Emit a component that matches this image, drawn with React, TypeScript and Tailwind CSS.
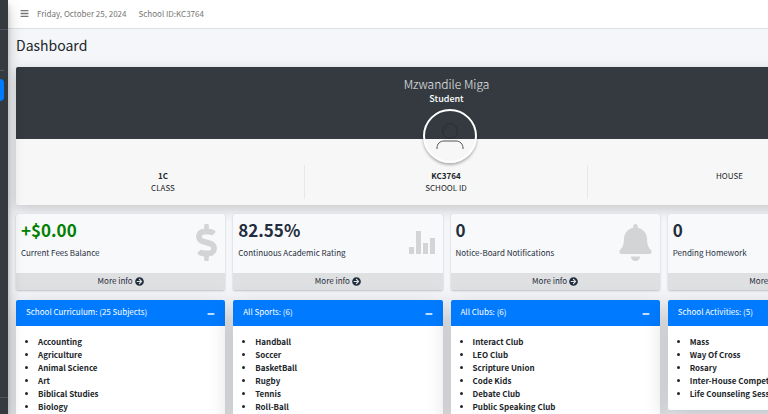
import type { ReactNode } from "react";
import {
  FaArrowCircleRight,
  FaBars,
  FaBell,
  FaBook,
  FaDollarSign,
  FaMinus,
} from "react-icons/fa";

type Stat = {
  value: string;
  label: string;
  icon: ReactNode;
  valueClass?: string;
};

const StatsBars = () => (
  <svg viewBox="0 0 26 23" className="mt-[7px] h-[23px] w-[26px]" fill="currentColor">
    <rect x="0" y="16" width="5" height="7" />
    <rect x="7" y="0" width="5" height="23" />
    <rect x="14" y="12" width="5" height="11" />
    <rect x="21" y="7" width="5" height="16" />
  </svg>
);

const stats: Stat[] = [
  {
    value: "+$0.00",
    label: "Current Fees Balance",
    icon: <FaDollarSign size={37} className="-mr-2" />,
    valueClass: "text-[green]",
  },
  { value: "82.55%", label: "Continuous Academic Rating", icon: <StatsBars /> },
  {
    value: "0",
    label: "Notice-Board Notifications",
    icon: <FaBell size={37} className="-mr-0.5" />,
  },
  { value: "0", label: "Pending Homework", icon: <FaBook size={37} /> },
];

const lists = [
  {
    title: "School Curriculum: (25 Subjects)",
    items: [
      "Accounting",
      "Agriculture",
      "Animal Science",
      "Art",
      "Biblical Studies",
      "Biology",
    ],
  },
  {
    title: "All Sports: (6)",
    items: ["Handball", "Soccer", "BasketBall", "Rugby", "Tennis", "Roll-Ball"],
  },
  {
    title: "All Clubs: (6)",
    items: [
      "Interact Club",
      "LEO Club",
      "Scripture Union",
      "Code Kids",
      "Debate Club",
      "Public Speaking Club",
    ],
  },
  {
    title: "School Activities: (5)",
    items: [
      "Mass",
      "Way Of Cross",
      "Rosary",
      "Inter-House Competitions",
      "Life Counseling Sessions",
    ],
  },
];

const details = [
  { value: "1C", label: "CLASS" },
  { value: "KC3764", label: "SCHOOL ID" },
  { value: "", label: "HOUSE" },
];

function Sidebar() {
  return (
    <aside className="z-10 flex w-2 shrink-0 flex-col bg-[#343a40] shadow-[0_7px_15px_rgba(0,0,0,0.25),0_5px_5px_rgba(0,0,0,0.22)]">
      <div className="h-[30px] border-b border-[#4b545c]" />
      <div className="mr-1 h-[41px] border-b border-[#4f5962]" />
      <a
        href="#dashboard"
        aria-label="Dashboard"
        className="mt-2 mr-1 block h-[22px] rounded-r-sm bg-[#007bff]"
      />
      <div className="mt-auto h-[17px] border-t border-[#4b545c]" />
    </aside>
  );
}

function Topbar() {
  return (
    <nav className="flex h-[29px] items-center border-b border-[#dee2e6] bg-white pb-px pl-3 text-[8px] leading-3 text-[#757575]">
      <button aria-label="Toggle menu">
        <FaBars size={9} />
      </button>
      <span className="ml-2">Friday, October 25, 2024</span>
      <span className="ml-3">School ID:KC3764</span>
    </nav>
  );
}

function ProfileCard() {
  return (
    <section className="rounded-xs bg-[#f7f7f7] shadow-[0_4px_14px_rgba(0,0,0,0.2)]">
      <div className="relative h-[72px] rounded-t-xs bg-[#343a40] pt-2 text-center text-white">
        <h3 className="text-[12px] leading-[17px] font-light text-white/90">Mzwandile Miga</h3>
        <h5 className="text-[9px] leading-[13px] font-medium">Student</h5>
        <div className="absolute top-[42px] left-1/2 -ml-6 h-[54px] w-[54px] rounded-full border-2 border-white shadow-[0_2px_3px_rgba(0,0,0,0.3)]">
          <svg
            viewBox="0 0 50 50"
            fill="none"
            stroke="#2b2e31"
            strokeWidth="1"
            className="h-full w-full"
          >
            <circle cx="25" cy="20" r="7.5" />
            <path d="M19.500 20a6 6 0 0 1 5-5" strokeWidth="0.6" />
            <path d="M12 38v-1c0-4 3-7 7-7h12c4 0 7 3 7 7v1" stroke="#555" />
          </svg>
        </div>
      </div>
      <div className="grid grid-cols-3 px-1.5 pt-6 pb-1 text-[8px] leading-3 text-[#212529]">
        {details.map((item) => (
          <div
            key={item.label}
            className="my-0.5 h-[34px] border-r border-[#e6e8ea] pt-[5px] text-center last:border-r-0"
          >
            {item.value && <h5 className="font-bold">{item.value}</h5>}
            <span>{item.label}</span>
          </div>
        ))}
      </div>
    </section>
  );
}

function StatBox({ value, label, icon, valueClass = "" }: Stat) {
  return (
    <div className="overflow-hidden rounded-xs bg-[#f8f9fa] text-[#1f2d3d] shadow-[0_0_1px_rgba(0,0,0,0.13),0_1px_2px_rgba(0,0,0,0.2)]">
      <div className="flex h-[59px] justify-between pt-1.5 pr-2 pl-[5px]">
        <div>
          <h3 className={`text-[17px] leading-5 font-bold ${valueClass}`}>{value}</h3>
          <p className="mt-[7px] text-[8px] leading-3 whitespace-nowrap">{label}</p>
        </div>
        <div className="pt-1 text-[#d3d4d5]">{icon}</div>
      </div>
      <a
        href="#more"
        className="flex h-[17px] items-center justify-center gap-0.5 bg-[#dfe0e1] pb-px text-[8px] leading-3"
      >
        More info <FaArrowCircleRight size={9} />
      </a>
    </div>
  );
}

function ListCard({ title, items }: { title: string; items: string[] }) {
  return (
    <div className="rounded-xs bg-white shadow-[0_8px_24px_rgba(0,0,0,0.22)]">
      <div className="flex h-[26px] items-center justify-between rounded-t-xs bg-[#007bff] px-[10px] pb-0.5 text-white">
        <h3 className="text-[8px] leading-3">{title}</h3>
        <button aria-label={`Collapse ${title}`} className="pt-1">
          <FaMinus size={8} />
        </button>
      </div>
      <ul className="list-disc pt-[9px] pr-[10px] pb-[10px] pl-[22px] text-[8px] leading-[13px] font-bold text-[#212529]">
        {items.map((item) => (
          <li key={item} className="whitespace-nowrap">
            {item}
          </li>
        ))}
      </ul>
    </div>
  );
}

export default function App() {
  return (
    <div className="flex h-screen overflow-hidden bg-[#f4f6f9] font-['Noto_Sans_CJK_SC','Open_Sans',sans-serif]">
      <Sidebar />
      <div className="min-w-0 flex-1">
        <Topbar />
        <main className="min-w-[877px] px-2">
          <h1 className="pt-1.5 text-[14px] leading-5 text-[#212529]">Dashboard</h1>
          <div className="mt-3">
            <ProfileCard />
          </div>
          <div className="mt-[9px] grid grid-cols-4 gap-2">
            {stats.map((stat) => (
              <StatBox key={stat.label} {...stat} />
            ))}
          </div>
          <div className="mt-[10px] grid grid-cols-4 items-start gap-2">
            {lists.map((list) => (
              <ListCard key={list.title} {...list} />
            ))}
          </div>
        </main>
      </div>
    </div>
  );
}
